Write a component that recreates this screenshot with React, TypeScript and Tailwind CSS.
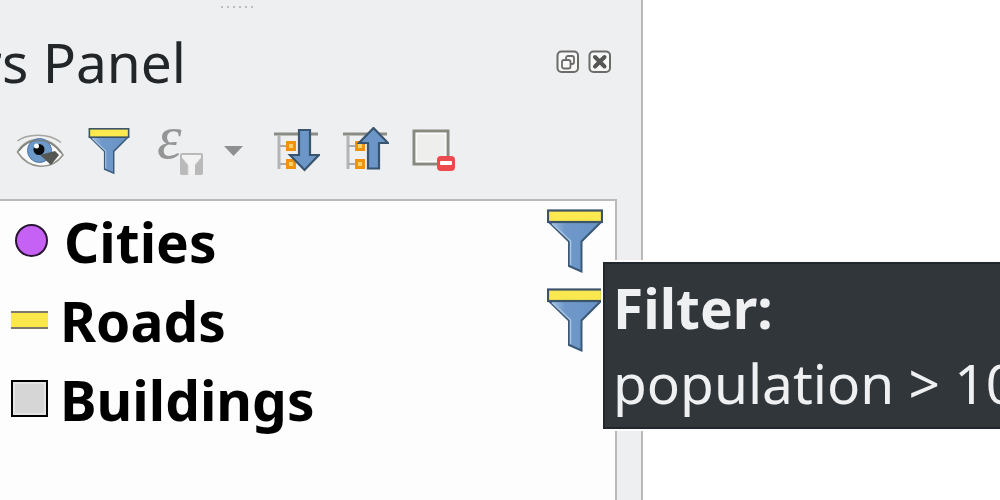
import React from 'react';

interface Layer {
  name: string;
  symbol: React.ReactNode;
  filtered: boolean;
}

const FunnelShape: React.FC<{ id: string }> = ({ id }) => (
  <>
    <defs>
      <linearGradient id={id} x1="0" y1="0" x2="1" y2="0">
        <stop offset="0" stopColor="#a9c6e6" />
        <stop offset="0.3" stopColor="#7099ca" />
        <stop offset="1" stopColor="#6793c4" />
      </linearGradient>
    </defs>
    <path d="M2 13 L22 32.5 V57 L34.5 62.5 V32.5 L54 13 Z" fill={`url(#${id})`} stroke="#3c5a78" strokeWidth="2" />
    <path d="M5 14.500 L23.500 32 V56" fill="none" stroke="#a9c6e6" strokeWidth="1.500" />
    <rect x="1" y="1.500" width="54" height="11.500" fill="#fbe94f" stroke="#3c5468" strokeWidth="2.200" />
  </>
);

const EyeIcon = () => (
  <svg viewBox="0 0 48 48" className="block size-12" aria-hidden="true">
    <path d="M1.500 14 C10 7 32 5 45 15.500" fill="none" stroke="#a5a6a0" strokeWidth="1.600" />
    <path d="M1.500 25 C11 9 34 7 47 28 C35 44 13 43 1.500 25 Z" fill="#fafafa" stroke="#92948c" strokeWidth="1.600" />
    <circle cx="23.500" cy="23.500" r="12" fill="#6c98ca" stroke="#4e76a6" strokeWidth="1" />
    <path d="M3 24 C13 10 33 9 45 26" fill="none" stroke="#7a7c76" strokeWidth="1.200" />
    <circle cx="23" cy="22.500" r="5.500" fill="#0b0d10" />
    <circle cx="20.500" cy="19" r="2.500" fill="#ffffff" />
    <path d="M24 28 L39 24 L43 28 L35 38 Z" fill="#555753" />
  </svg>
);

const FilterIcon = () => (
  <svg viewBox="-4 -1 64 66" className="block size-12" aria-hidden="true">
    <FunnelShape id="toolbar-funnel" />
  </svg>
);

const ExpressionIcon = () => (
  <svg viewBox="0 0 50 48" className="block h-12 w-[50px]" aria-hidden="true">
    <text x="3" y="31" fontSize="62" fill="#959595" fontStyle="italic" className="font-['Liberation_Serif',serif]">
      ε
    </text>
    <rect x="26" y="26" width="23" height="22" rx="2" fill="#b9b9b9" />
    <path d="M28 28 H47 V31 L41 38 V48 H34 V38 L28 31 Z" fill="#f2f2f2" />
    <path d="M28 31 L34 38 V48 M47 31 L41 38" fill="none" stroke="#cfcfcf" strokeWidth="1" />
  </svg>
);

const TreeBase = () => (
  <>
    <path d="M2 7 H46" stroke="#8b8d85" strokeWidth="3" />
    <path d="M7 8 V42" stroke="#b4b4b4" strokeWidth="3" />
    <path d="M8 19 H15 M8 37 H15" stroke="#aaaaaa" strokeWidth="2" />
    <rect x="15.500" y="15.500" width="7" height="7" fill="#fcd06a" stroke="#f2920c" strokeWidth="3" />
    <rect x="15.500" y="33.500" width="7" height="7" fill="#fcd06a" stroke="#f2920c" strokeWidth="3" />
  </>
);

const ExpandIcon = () => (
  <svg viewBox="0 0 48 48" className="block size-12" aria-hidden="true">
    <TreeBase />
    <path d="M27 3 H38 V28 H47 L32.500 43 L18 28 H27 Z" fill="#6b96c7" stroke="#39546f" strokeWidth="2.200" />
  </svg>
);

const CollapseIcon = () => (
  <svg viewBox="0 0 48 48" className="block size-12" aria-hidden="true">
    <TreeBase />
    <path d="M27 41.500 H38 V16 H47 L32.500 1 L18 16 H27 Z" fill="#6b96c7" stroke="#39546f" strokeWidth="2.200" />
  </svg>
);

const RemoveIcon = () => (
  <svg viewBox="0 0 48 48" className="block size-12" aria-hidden="true">
    <rect x="4" y="4" width="34" height="33" fill="#eeeeec" stroke="#888a80" strokeWidth="3" />
    <rect x="6.500" y="6.500" width="29" height="28" fill="none" stroke="#fafafa" strokeWidth="1.500" />
    <rect x="27" y="29" width="18" height="15" rx="4" fill="#ec4a4f" />
    <rect x="30" y="34" width="12" height="4" rx="1" fill="#ffffff" />
  </svg>
);

const FloatIcon = () => (
  <svg viewBox="0 0 24 24" className="block size-6" aria-hidden="true">
    <rect x="1.500" y="1.500" width="20.500" height="20.500" rx="4" fill="#f8f8f8" stroke="#6b6b69" strokeWidth="2" />
    <rect x="10" y="6" width="8" height="8" rx="2" fill="none" stroke="#6b6b69" strokeWidth="1.800" />
    <rect x="6" y="10" width="8.500" height="8.500" rx="2" fill="#f8f8f8" stroke="#6b6b69" strokeWidth="1.800" />
  </svg>
);

const CloseIcon = () => (
  <svg viewBox="0 0 24 24" className="block size-6" aria-hidden="true">
    <rect x="1.500" y="1.500" width="20.500" height="20.500" rx="4" fill="#f8f8f8" stroke="#6b6b69" strokeWidth="2" />
    <path d="M7 7 L16.500 16.500 M16.500 7 L7 16.500" stroke="#555553" strokeWidth="4" strokeLinecap="round" />
  </svg>
);

const layers: Layer[] = [
  {
    name: 'Cities',
    symbol: <span className="ml-1 mr-4 size-[33px] rounded-full border-2 border-[#2a1533] bg-[#c562f5]" />,
    filtered: true,
  },
  {
    name: 'Roads',
    symbol: <span className="mr-3 h-[18px] w-[37px] border-y-2 border-[#7d7a68] bg-[#fde84c]" />,
    filtered: true,
  },
  {
    name: 'Buildings',
    symbol: <span className="mr-3 size-[37px] border-2 border-black bg-[#d6d6d6] inset-ring-2 inset-ring-[#e4e4e4]" />,
    filtered: false,
  },
];

const tools = [
  { label: 'Manage map themes', icon: <EyeIcon /> },
  { label: 'Filter legend', icon: <FilterIcon /> },
];

const treeTools = [
  { label: 'Expand all', icon: <ExpandIcon /> },
  { label: 'Collapse all', icon: <CollapseIcon /> },
  { label: 'Remove layer', icon: <RemoveIcon /> },
];

const LayerRow: React.FC<{ layer: Layer }> = ({ layer }) => (
  <li className="flex h-[79px] items-center pl-[11px] pr-3">
    {layer.symbol}
    <span className="flex-1 pt-[2px] text-[55px] font-bold leading-[75px] text-black">{layer.name}</span>
    {layer.filtered && (
      <button type="button" aria-label={`Edit filter of ${layer.name}`}>
        <svg viewBox="0 0 56 64" className="block h-16 w-14" aria-hidden="true">
          <FunnelShape id={`funnel-${layer.name}`} />
        </svg>
      </button>
    )}
  </li>
);

const FilterTooltip = () => (
  <div
    role="tooltip"
    className="absolute -right-[600px] left-[603px] top-[262px] whitespace-nowrap border-2 border-[#22272d] bg-[#31363b] px-2 pb-[7px] pt-[6px] text-[55px] leading-[75px] text-[#eff0f1] outline-2 outline-[#fcfcfc]"
  >
    <p className="font-bold">Filter:</p>
    <p>population &gt; 10</p>
  </div>
);

const App: React.FC = () => {
  return (
    <main className="relative flex min-h-screen overflow-hidden bg-white font-['Noto_Sans',sans-serif]">
      <section aria-label="Layers Panel" className="flex w-[643px] flex-col border-r-2 border-[#b9babb] bg-[#eeeff0] pr-6">
        <div className="flex h-[13px] items-center justify-end gap-1 pr-[364px]">
          {[0, 1, 2, 3, 4, 5].map((dot) => (
            <span key={dot} className="size-[2px] bg-[#bcbdbe]" />
          ))}
        </div>

        <header className="flex h-[98px] items-center justify-between pr-[5px]">
          <h1 className="flex w-[186px] justify-end overflow-hidden whitespace-nowrap pb-[2px] text-[55px] leading-[75px] text-[#232629]">
            Layers Panel
          </h1>
          <div className="flex gap-2">
            <button type="button" aria-label="Float panel">
              <FloatIcon />
            </button>
            <button type="button" aria-label="Close panel">
              <CloseIcon />
            </button>
          </div>
        </header>

        <div role="toolbar" aria-label="Layer tools" className="flex items-center gap-[21px] pb-6 pl-4 pt-4">
          {tools.map((tool) => (
            <button key={tool.label} type="button" aria-label={tool.label}>
              {tool.icon}
            </button>
          ))}
          <button type="button" aria-label="Filter legend by expression" className="flex items-center gap-5 pr-2">
            <ExpressionIcon />
            <svg viewBox="0 0 19 10" className="block h-[10px] w-[19px]" aria-hidden="true">
              <path d="M0 0 H19 L9.500 10 Z" fill="#8e8f90" />
            </svg>
          </button>
          {treeTools.map((tool) => (
            <button key={tool.label} type="button" aria-label={tool.label}>
              {tool.icon}
            </button>
          ))}
        </div>

        <ul className="flex-1 border-r-2 border-t-2 border-[#b9babb] bg-[#fdfdfd]">
          {layers.map((layer) => (
            <LayerRow key={layer.name} layer={layer} />
          ))}
        </ul>
      </section>

      <FilterTooltip />
    </main>
  );
};

export default App;
